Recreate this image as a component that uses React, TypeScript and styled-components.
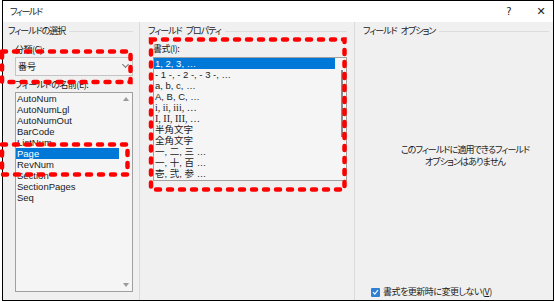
import styled, { createGlobalStyle } from 'styled-components';

const GlobalStyle = createGlobalStyle`
  html, body {
    margin: 0;
    padding: 0;
    background: #fff;
  }
  body {
    font-family: "Noto Sans CJK JP", "Noto Sans", sans-serif;
    font-feature-settings: "palt";
    font-size: 9px;
    color: #1a1a1a;
  }
`;

const Frame = styled.div`
  position: relative;
  width: 555px;
  height: 302px;
  overflow: hidden;
  background: #fff;
`;

const Dialog = styled.div`
  margin-left: 2px;
  width: 552px;
  height: 301px;
  box-sizing: border-box;
  border: 1px solid #000;
  background: #f0f0f0;
  display: flex;
  flex-direction: column;
`;

const TitleBar = styled.div`
  height: 21px;
  flex-shrink: 0;
  display: flex;
  align-items: center;
  padding: 0 4px 0 7px;
  background: #fff;
`;

const Title = styled.span`
  flex: 1;
  line-height: 12px;
  letter-spacing: -1.4px;
`;

const TitleButton = styled.span<{ $size: number }>`
  width: 16px;
  text-align: center;
  font-family: "DejaVu Sans", sans-serif;
  font-size: ${p => p.$size}px;
  line-height: 12px;
  color: #222;
  & + & {
    margin-left: 16px;
  }
`;

const Body = styled.div`
  flex: 1;
  display: flex;
  min-height: 0;
`;

const Column = styled.div<{ $width?: number; $padLeft: number; $padRight: number }>`
  ${p => (p.$width ? `width: ${p.$width}px; flex-shrink: 0;` : 'flex: 1;')}
  box-sizing: border-box;
  padding: 0 ${p => p.$padRight}px 0 ${p => p.$padLeft}px;
  border-right: ${p => (p.$width ? '1px solid #dadada' : 'none')};
  display: flex;
  flex-direction: column;
`;

const GroupHeader = styled.div`
  display: flex;
  align-items: center;
  margin-top: 3px;
  height: 12px;
  line-height: 12px;
  white-space: pre;
  letter-spacing: -1px;
  word-spacing: 3px;

  &::after {
    content: '';
    flex: 1;
    height: 1px;
    margin-left: 4px;
    background: #dcdcdc;
  }
`;

const Content = styled.div<{ $indent: number }>`
  padding-left: ${p => p.$indent}px;
  display: flex;
  flex-direction: column;
`;

const Label = styled.div<{ $top: number }>`
  margin-top: ${p => p.$top}px;
  line-height: 12px;
  white-space: nowrap;
  letter-spacing: -0.5px;
`;

const Combo = styled.div`
  margin-top: 1px;
  height: 19px;
  box-sizing: border-box;
  border: 1px solid #c4c4c4;
  background: #f4f4f4;
  display: flex;
  align-items: center;
  justify-content: space-between;
  padding: 0 4px 0 2px;
`;

const Chevron = styled.span`
  width: 4px;
  height: 4px;
  border-right: 1px solid #777;
  border-bottom: 1px solid #777;
  transform: translateY(-2px) rotate(45deg);
`;

const ListBox = styled.div<{ $height: number; $top: number }>`
  margin-top: ${p => p.$top}px;
  height: ${p => p.$height}px;
  box-sizing: border-box;
  border: 1px solid #a0a0a0;
  background: #f5f5f5;
  display: flex;
`;

const Rows = styled.div<{ $width: number }>`
  width: ${p => p.$width}px;
  flex-shrink: 0;
  font-family: "Liberation Sans", "Noto Sans CJK JP", sans-serif;
  font-size: 9.5px;
  font-feature-settings: normal;
  font-variant-ligatures: none;
`;

const Row = styled.div<{ $selected?: boolean; $serif?: boolean }>`
  height: 11px;
  line-height: 11px;
  padding-left: 1px;
  white-space: pre;
  ${p => (p.$serif ? 'font-family: "Liberation Serif", "Noto Sans CJK JP", serif; font-size: 10px;' : '')}
  background: ${p => (p.$selected ? '#0078d7' : 'transparent')};
  color: ${p => (p.$selected ? '#fff' : '#1a1a1a')};
`;

const ArrowGutter = styled.div`
  flex: 1;
  display: flex;
  flex-direction: column;
  align-items: center;
  justify-content: space-between;
  padding: 4px 0 4px;
`;

const Arrow = styled.span<{ $down?: boolean }>`
  width: 0;
  height: 0;
  border-left: 3px solid transparent;
  border-right: 3px solid transparent;
  ${p => (p.$down ? 'border-top: 4px solid #9a9a9a;' : 'border-bottom: 4px solid #9a9a9a;')}
`;

const ThumbGutter = styled.div`
  flex: 1;
  padding: 12px 0 0 6px;
`;

const Thumb = styled.div`
  width: 2px;
  height: 67px;
  background: #8a8a8a;
`;

const Message = styled.div`
  margin-top: 107px;
  padding-left: 18px;
  text-align: center;
  line-height: 12px;
  letter-spacing: -0.9px;
`;

const CheckRow = styled.label`
  margin-top: auto;
  margin-bottom: 2px;
  padding-left: 8px;
  display: flex;
  align-items: center;
  gap: 3px;
  line-height: 12px;
  white-space: nowrap;
  letter-spacing: -0.5px;
`;

const CheckBox = styled.span`
  width: 9px;
  height: 9px;
  border-radius: 1px;
  background: #2f7fd3;
  display: flex;
  align-items: center;
  justify-content: center;
`;

const Overlay = styled.svg`
  position: absolute;
  left: 0;
  top: 0;
  pointer-events: none;
`;

const fieldNames = [
  'AutoNum',
  'AutoNumLgl',
  'AutoNumOut',
  'BarCode',
  'ListNum',
  'Page',
  'RevNum',
  'Section',
  'SectionPages',
  'Seq',
];

const formats = [
  { text: '1, 2, 3, …' },
  { text: '- 1 -, - 2 -, - 3 -, …' },
  { text: 'a, b, c, …' },
  { text: 'A, B, C, …' },
  { text: 'i, ii, iii, …', serif: true },
  { text: 'I, II, III, …', serif: true },
  { text: '半角文字' },
  { text: '全角文字' },
  { text: '一, 二, 三 …' },
  { text: '一, 十, 百 …' },
  { text: '壱, 弐, 参 …' },
];

const marks = [
  { x: 2, y: 51.5, w: 128.5, h: 30.5 },
  { x: 2, y: 144.5, w: 125.5, h: 30 },
  { x: 151, y: 39.5, w: 193.5, h: 150 },
];

export default function App() {
  return (
    <Frame>
      <GlobalStyle />
      <Dialog>
        <TitleBar>
          <Title>フィールド</Title>
          <TitleButton $size={10}>?</TitleButton>
          <TitleButton $size={11}>✕</TitleButton>
        </TitleBar>
        <Body>
          <Column $width={137} $padLeft={5} $padRight={6}>
            <GroupHeader>フィールドの選択</GroupHeader>
            <Content $indent={7}>
              <Label $top={7}>分類(C):</Label>
              <Combo>
                <span>番号</span>
                <Chevron />
              </Combo>
              <Label $top={3}>フィールドの名前(E):</Label>
              <ListBox $top={1} $height={200}>
                <Rows $width={103}>
                  {fieldNames.map(n => (
                    <Row key={n} $selected={n === 'Page'}>
                      {n}
                    </Row>
                  ))}
                </Rows>
                <ArrowGutter>
                  <Arrow />
                  <Arrow $down />
                </ArrowGutter>
              </ListBox>
            </Content>
          </Column>
          <Column $width={215} $padLeft={8} $padRight={7}>
            <GroupHeader>フィールド プロパティ</GroupHeader>
            <Content $indent={5}>
              <Label $top={6}>書式(I):</Label>
              <ListBox $top={2} $height={124}>
                <Rows $width={181}>
                  {formats.map((f, i) => (
                    <Row key={f.text} $selected={i === 0} $serif={f.serif}>
                      {f.text}
                    </Row>
                  ))}
                </Rows>
                <ThumbGutter>
                  <Thumb />
                </ThumbGutter>
              </ListBox>
            </Content>
          </Column>
          <Column $padLeft={8} $padRight={4}>
            <GroupHeader>フィールド オプション</GroupHeader>
            <Message>
              このフィールドに適用できるフィールド
              <br />
              オプションはありません
            </Message>
            <CheckRow>
              <CheckBox>
                <svg width="7" height="6" viewBox="0 0 7 6">
                  <path d="M1 3.2 L2.8 5 L6 1" stroke="#fff" strokeWidth="1.2" fill="none" />
                </svg>
              </CheckBox>
              <span>
                書式を更新時に変更しない(<u>V</u>)
              </span>
            </CheckRow>
          </Column>
        </Body>
      </Dialog>
      <Overlay width="555" height="302">
        {marks.map((m, i) => (
          <rect
            key={i}
            x={m.x}
            y={m.y}
            width={m.w}
            height={m.h}
            fill="none"
            stroke="#f00"
            strokeWidth="4.5"
            strokeDasharray="4 8"
            strokeLinecap="round"
          />
        ))}
      </Overlay>
    </Frame>
  );
}
